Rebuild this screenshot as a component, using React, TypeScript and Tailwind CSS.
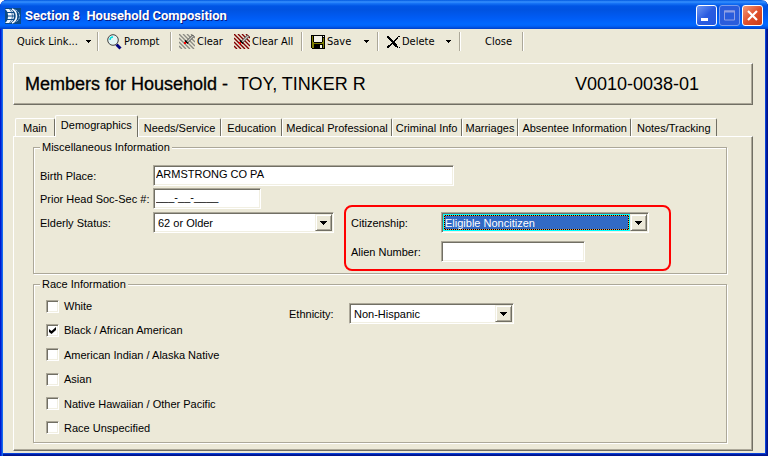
import { useState, type ReactNode } from "react"
import clsx from "clsx"

const tabs = [
  { name: "Main", pad: "px-[7px]" },
  { name: "Demographics", pad: "px-[5px]" },
  { name: "Needs/Service", pad: "px-[5px]" },
  { name: "Education", pad: "px-[5px]" },
  { name: "Medical Professional", pad: "px-[3px]" },
  { name: "Criminal Info", pad: "px-[3px]" },
  { name: "Marriages", pad: "px-[3px]" },
  { name: "Absentee Information", pad: "px-[3px]" },
  { name: "Notes/Tracking", pad: "px-[5px]" },
]

const races = [
  "White",
  "Black / African American",
  "American Indian / Alaska Native",
  "Asian",
  "Native Hawaiian / Other Pacific",
  "Race Unspecified",
]

const palette: Record<string, string> = {
  k: "#000000",
  o: "#808000",
  w: "#f4f2e8",
}

const floppy = [
  "kkkkkkkkkkkkkk",
  "kokwwwwwwwwkwk",
  "kokwwwwwwwwkkk",
  "kokwwwwwwwwkok",
  "kokwwwwwwwwkok",
  "kokwwwwwwwwkok",
  "kokwwwwwwwwkok",
  "kookkkkkkkkook",
  "kooooooooooook",
  "kookkkkkkkkkok",
  "kookkkkkkwwkok",
  "kookkkkkkwwkok",
  "kookkkkkkwwkok",
  ".kkkkkkkkkkkkk",
]

const cross = [
  "kk.........kk",
  "kkk.......k..",
  ".kkk.....kk..",
  "..kkk...kk...",
  "...kkk.kk....",
  "....kkkk.....",
  ".....kkk.....",
  "....kkkkk....",
  "...kk.kkkk...",
  ".kkk...kkk...",
  "kkk.....kkk..",
  "kk........k.k",
]

function Sprite({ rows }: { rows: string[] }) {
  return (
    <svg width={rows[0].length} height={rows.length} shapeRendering="crispEdges" aria-hidden="true">
      {rows.flatMap((row, y) =>
        [...row].map((c, x) => (c === "." ? null : <rect key={`${x}-${y}`} x={x} y={y} width="1" height="1" fill={palette[c]} />)),
      )}
    </svg>
  )
}

function Magnifier() {
  return (
    <svg width="15" height="16" viewBox="0 0 15 16" aria-hidden="true">
      <path d="M9.5 10.5l4 4" stroke="#000080" strokeWidth="3" />
      <circle cx="6" cy="6" r="5.3" fill="#e4f4f4" stroke="#404040" />
      <path d="M3 6a3 3 0 0 1 3-3" fill="none" stroke="#00e0e0" strokeWidth="1.4" />
    </svg>
  )
}

function Hatch({ color }: { color: string }) {
  return (
    <svg width="16" height="15" viewBox="0 0 16 15" aria-hidden="true">
      <g stroke={color} strokeWidth="1.4">
        <path d="M0 12l3 3M0 8l7 7M0 4l11 11M0 0l15 15M4 0l12 12M8 0l8 8M12 0l4 4" />
      </g>
      <path d="M7 7.5L13.5 1l1.500 1.500L8.500 9z" fill="#c8c8c0" stroke="#303030" strokeWidth="0.8" />
      <path d="M6 6.500l3 3" stroke="#000" strokeWidth="1.6" />
      <rect x="5" y="8" width="2" height="2" fill="#f00" />
    </svg>
  )
}

function Arrow({ small }: { small?: boolean }) {
  return (
    <svg width={small ? 5 : 7} height={small ? 3 : 4} shapeRendering="crispEdges" aria-hidden="true">
      <path d={small ? "M0 0h5v1H4v1H3v1H2V2H1V1H0z" : "M0 0h7v1H6v1H5v1H4v1H3V3H2V2H1V1H0z"} />
    </svg>
  )
}

function Separator() {
  return <span className="h-[19px] w-0.5 border-l border-r border-l-[#aca899] border-r-white" />
}

function ToolButton({ icon, children, menu, className }: { icon?: ReactNode; children: ReactNode; menu?: boolean; className?: string }) {
  return (
    <button type="button" className={clsx("flex h-5 items-center gap-0.5 whitespace-nowrap", className)}>
      {icon}
      <span>{children}</span>
      {menu && (
        <span className="ml-auto">
          <Arrow small />
        </span>
      )}
    </button>
  )
}

const sunken =
  "border border-t-[#aca899] border-l-[#aca899] border-r-white border-b-white bg-white shadow-[inset_1px_1px_0_#716f64,inset_-1px_-1px_0_#f1efe2]"

function TextField({ id, value, className }: { id: string; value?: string; className: string }) {
  return <input id={id} type="text" defaultValue={value} className={clsx("h-[21px] px-0.5 pb-[3px] outline-none", sunken, className)} />
}

function Dropdown({ id, options, active, className }: { id: string; options: string[]; active?: boolean; className: string }) {
  return (
    <div className={clsx("relative h-[21px] p-px", sunken, className)}>
      <select
        id={id}
        className={clsx("block h-[17px] w-full appearance-none outline-none", active ? "bg-[#316ac5] pl-0.5 text-white" : "bg-white pl-[3px]")}
      >
        {options.map((o) => (
          <option key={o}>{o}</option>
        ))}
      </select>
      {active && (
        <span className="pointer-events-none absolute inset-y-px right-[18px] left-px border border-[#00ffff]">
          <span className="absolute inset-0 border border-black" />
          <span className="absolute inset-0 border border-dotted border-[#f0a040]" />
        </span>
      )}
      <span className="pointer-events-none absolute inset-y-px right-px flex w-[17px] items-center justify-center border border-t-[#f1efe2] border-r-[#716f64] border-b-[#716f64] border-l-[#f1efe2] bg-[#ece9d8] shadow-[inset_1px_1px_0_#fff,inset_-1px_-1px_0_#aca899]">
        <Arrow />
      </span>
    </div>
  )
}

function Group({ title, className, children }: { title: string; className?: string; children: ReactNode }) {
  return (
    <fieldset
      className={clsx("min-w-0 border border-[#aca899] px-1.5 shadow-[1px_1px_0_#fff,inset_1px_1px_0_#fff]", className)}
    >
      <legend className="bg-[#ece9d8] px-0.5 leading-[14px]">{title}</legend>
      {children}
    </fieldset>
  )
}

function CaptionButton({ label, className, children }: { label: string; className: string; children: ReactNode }) {
  return (
    <button type="button" aria-label={label} className={clsx("h-[21px] w-[21px] rounded-[3px] border", className)}>
      <svg width="19" height="19" viewBox="0 0 19 19" aria-hidden="true">
        {children}
      </svg>
    </button>
  )
}

export default function App() {
  const [tab, setTab] = useState("Demographics")
  const [checked, setChecked] = useState(["Black / African American"])

  const toggle = (race: string) =>
    setChecked((c) => (c.includes(race) ? c.filter((r) => r !== race) : [...c, race]))

  return (
    <div className="flex min-h-screen flex-col overflow-hidden rounded-t-[7px] bg-[#ece9d8] px-[3px] pb-[3px] font-['Liberation_Sans',Arial,sans-serif] text-[11px] leading-[14px] text-black shadow-[inset_1px_0_0_#0019cf,inset_2px_0_0_#0840e0,inset_3px_0_0_#166aee,inset_-1px_-1px_0_#00138c,inset_-2px_-2px_0_#001ea0,inset_-3px_-3px_0_#0841d9]">
      {/* Title bar */}
      <header className="-mx-[3px] flex h-[29px] items-center bg-[linear-gradient(to_bottom,#0058e0_0px,#3a93ff_2px,#1a78f8_3px,#0055e5_6px,#0053e1_10px,#005cf5_18px,#0068ff_24px,#0062f8_26px,#0040c8_29px)] pt-0.5 pr-[5px] pl-[5px]">
        <svg width="16" height="16" viewBox="0 0 16 16" className="mr-1" aria-hidden="true">
          <rect width="16" height="16" fill="#0b4a86" />
          <path d="M0 1h5q4 2 4 7t-4 7H0q3-2 3-7T0 1z" fill="#f4f8ff" />
          <path d="M1 4.500h8M2 8h8M1 11.500h8" stroke="#0b4a86" />
          <path d="M4.500 1q3 3 3 7t-3 7" fill="none" stroke="#0b4a86" strokeWidth="0.7" />
          <path d="M7 1q4.500 2 4.500 7T7 15" fill="none" stroke="#f4f8ff" strokeWidth="1.600" />
          <path d="M10.500 2q4 2 4 6t-4 6" fill="none" stroke="#b8d4f0" strokeDasharray="2 1" />
        </svg>
        <h1 className="flex-1 font-[Roboto,sans-serif] text-[13px] font-bold whitespace-pre text-white [text-shadow:1px_1px_0_#0a1883]">
          {"Section 8  Household Composition"}
        </h1>
        <div className="flex gap-0.5">
          <CaptionButton label="Minimize" className="border-white bg-linear-to-br from-[#6f96f2] via-[#2a5ce0] to-[#2458e0]">
            <rect x="4" y="12" width="7" height="3" fill="#fff" />
          </CaptionButton>
          <CaptionButton label="Maximize" className="border-[#7a9cec] bg-[#2a5cdc]">
            <path d="M4.500 5h10v9h-10z" fill="none" stroke="#8f9fe4" />
            <path d="M4 5.500h11" stroke="#8f9fe4" strokeWidth="2" />
          </CaptionButton>
          <CaptionButton label="Close window" className="border-white bg-linear-to-br from-[#f09878] via-[#e0502c] to-[#cc3c14]">
            <path d="M5 5l9 9M14 5l-9 9" stroke="#fff" strokeWidth="2.200" />
          </CaptionButton>
        </div>
      </header>

      {/* Toolbar */}
      <div className="flex h-[25px] items-center pl-3.5 font-['DejaVu_Sans_Condensed','DejaVu_Sans',sans-serif]">
        <ToolButton menu className="mr-1.5 w-[74px]">Quick Link...</ToolButton>
        <Separator />
        <ToolButton icon={<Magnifier />} className="mx-2 w-[55px]">Prompt</ToolButton>
        <Separator />
        <ToolButton icon={<Hatch color="#8c8c84" />} className="ml-[7px] w-[55px]">Clear</ToolButton>
        <ToolButton icon={<Hatch color="#800000" />} className="mr-[7px] w-[60px]">Clear All</ToolButton>
        <Separator />
        <ToolButton icon={<Sprite rows={floppy} />} menu className="mr-2 ml-2 w-[58px]">Save</ToolButton>
        <Separator />
        <ToolButton icon={<Sprite rows={cross} />} menu className="mr-2 ml-2 w-[64px]">Delete</ToolButton>
        <Separator />
        <ToolButton className="w-[61px] justify-center pl-3.5">Close</ToolButton>
        <Separator />
      </div>

      {/* Household banner */}
      <div className="mt-[9px] mr-3 ml-2.5 flex h-[42px] items-center border border-t-white border-r-[#716f64] border-b-[#716f64] border-l-white px-[11px] text-[18px] shadow-[inset_-1px_-1px_0_#aca899]">
        <h2 className="w-[550px] whitespace-pre">
          <span className="[-webkit-text-stroke:0.3px_#000]">Members for Household -</span>
          {"  TOY, TINKER R"}
        </h2>
        <span>V0010-0038-01</span>
      </div>

      {/* Tabs */}
      <div role="tablist" className="z-10 mx-3 mt-2.5 flex h-[21px] items-end">
        {tabs.map(({ name, pad }) => (
          <button
            key={name}
            type="button"
            role="tab"
            aria-selected={name === tab}
            onClick={() => setTab(name)}
            className={clsx(
              "rounded-t-[2px] border border-b-0 border-t-white border-r-[#716f64] border-l-white bg-[#ece9d8] whitespace-nowrap",
              pad,
              name === tab ? "-mb-px h-[22px] pb-1" : "h-[18px]",
            )}
          >
            {name}
          </button>
        ))}
      </div>

      <main className="mr-3 mb-0.5 ml-2.5 flex flex-1 flex-col gap-[3px] border border-t-white border-r-[#716f64] border-b-[#716f64] border-l-white pt-[3px] pr-[25px] pb-[7px] pl-[19px] shadow-[inset_-1px_-1px_0_#aca899]">
        <Group title="Miscellaneous Information" className="pb-0.5">
          <div className="mt-[11px] flex items-center">
            <label htmlFor="birth" className="w-[113px]">Birth Place:</label>
            <TextField id="birth" value="ARMSTRONG CO PA" className="w-[301px]" />
          </div>
          <div className="mt-0.5 flex items-start">
            <div className="flex w-[304px] flex-col gap-[3px]">
              <div className="flex items-center">
                <label htmlFor="ssn" className="w-[113px] whitespace-nowrap">Prior Head Soc-Sec #:</label>
                <TextField id="ssn" value="___-__-____" className="w-[108px]" />
              </div>
              <div className="flex items-center">
                <label htmlFor="elderly" className="w-[113px]">Elderly Status:</label>
                <Dropdown id="elderly" options={["62 or Older", "Under 62"]} className="w-[181px]" />
              </div>
            </div>
            <div className="mt-[17px] flex h-[66px] w-[327px] flex-col gap-2 rounded-[8px] border-2 border-[#ff0000] pt-[5px] pl-[5px]">
              <div className="flex items-center">
                <label htmlFor="citizenship" className="w-[90px]">Citizenship:</label>
                <Dropdown id="citizenship" active options={["Eligible Noncitizen", "Citizen"]} className="w-[208px]" />
              </div>
              <div className="flex items-center">
                <label htmlFor="alien" className="w-[90px]">Alien Number:</label>
                <TextField id="alien" className="w-[144px]" />
              </div>
            </div>
          </div>
        </Group>

        <Group title="Race Information" className="flex-1">
          <div className="flex items-start pt-2">
            <div className="flex h-[136px] w-[249px] flex-col justify-between pl-1.5">
              {races.map((race) => (
                <label key={race} className="flex items-center gap-[5px]">
                  <span className="relative flex">
                    <input
                      type="checkbox"
                      checked={checked.includes(race)}
                      onChange={() => toggle(race)}
                      className={clsx("h-[13px] w-[13px] appearance-none", sunken)}
                    />
                    {checked.includes(race) && (
                      <svg className="pointer-events-none absolute top-[3px] left-[3px]" width="7" height="7" aria-hidden="true">
                        <path d="M0 2v3l2.500 2L7 3V0L2.500 4z" />
                      </svg>
                    )}
                  </span>
                  {race}
                </label>
              ))}
            </div>
            <div className="mt-1 flex items-center">
              <label htmlFor="ethnicity" className="w-[60px]">Ethnicity:</label>
              <Dropdown id="ethnicity" options={["Non-Hispanic", "Hispanic"]} className="w-[165px]" />
            </div>
          </div>
        </Group>
      </main>
    </div>
  )
}
